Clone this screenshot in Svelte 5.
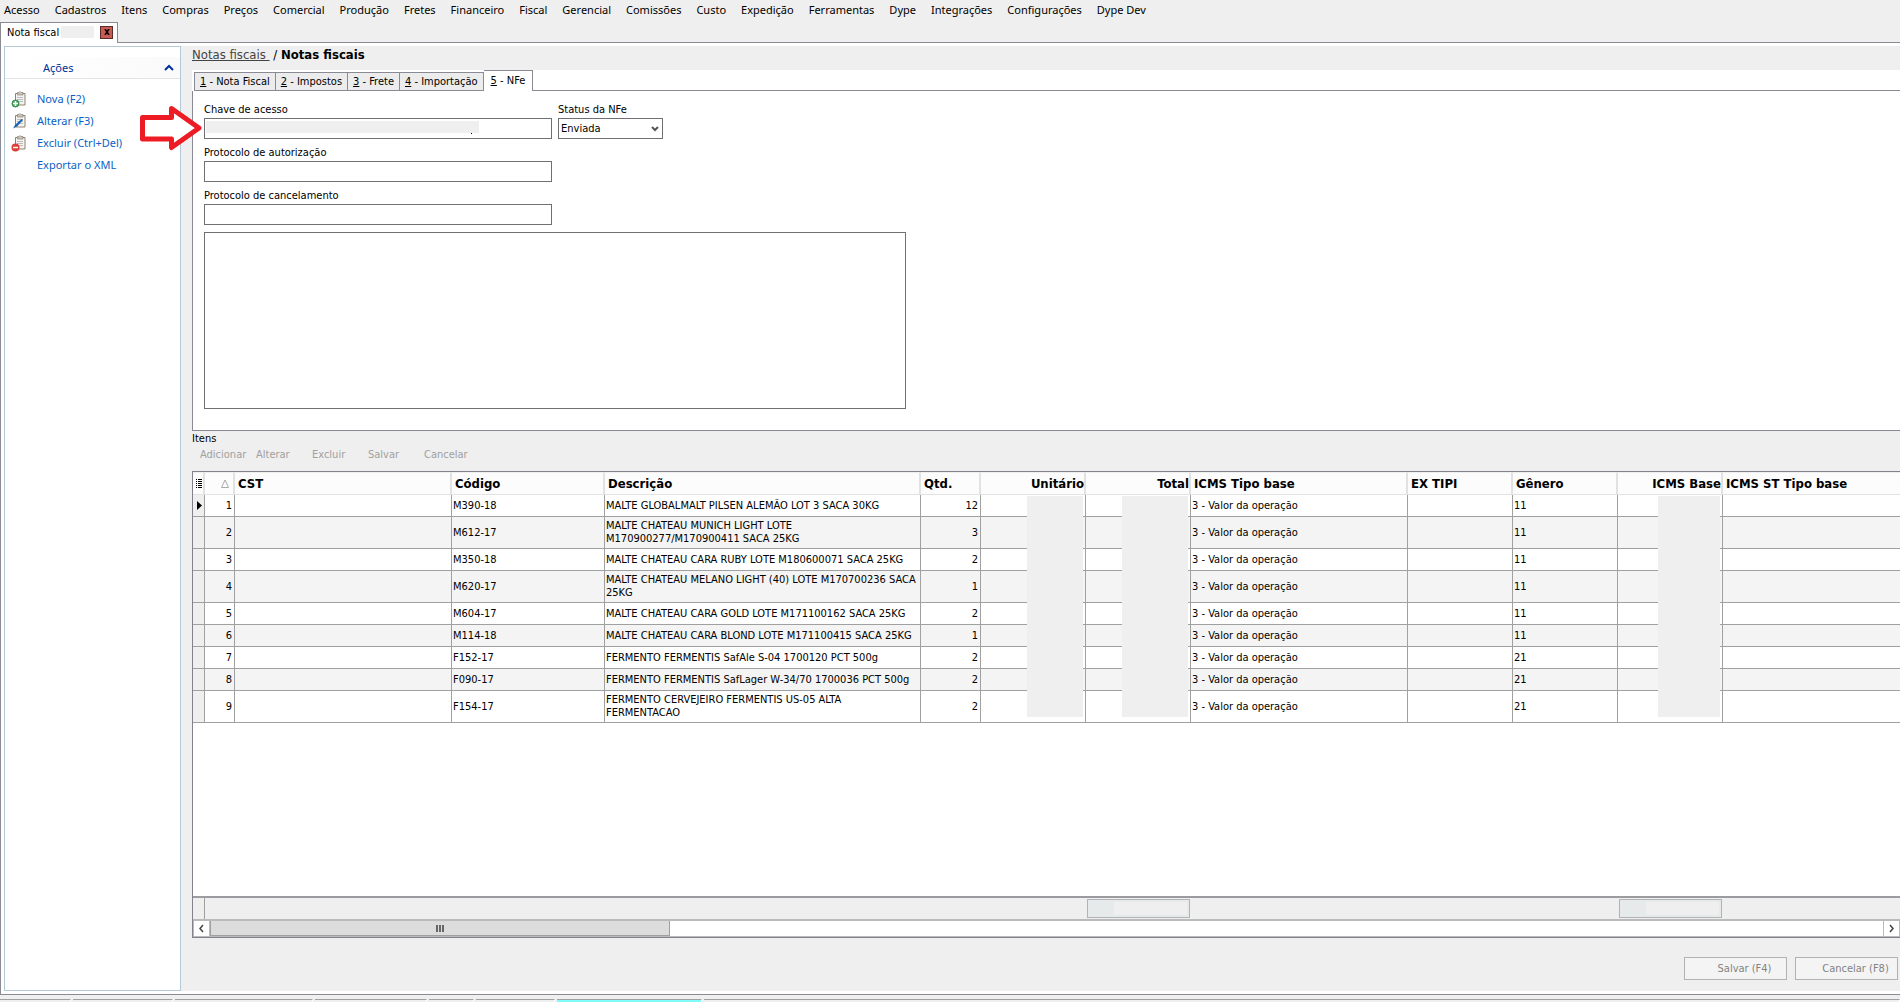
<script lang="ts">
  interface Action {
    label: string;
    icon: 'add' | 'edit' | 'remove' | '';
  }

  interface Item {
    code: string;
    description: string;
    qty: number;
    genre: number;
  }

  const menu = ['Acesso', 'Cadastros', 'Itens', 'Compras', 'Preços', 'Comercial', 'Produção', 'Fretes',
    'Financeiro', 'Fiscal', 'Gerencial', 'Comissões', 'Custo', 'Expedição', 'Ferramentas', 'Dype',
    'Integrações', 'Configurações', 'Dype Dev'];

  const actions: Action[] = [
    { label: 'Nova (F2)', icon: 'add' },
    { label: 'Alterar (F3)', icon: 'edit' },
    { label: 'Excluir (Ctrl+Del)', icon: 'remove' },
    { label: 'Exportar o XML', icon: '' }
  ];

  const tabs = ['Nota Fiscal', 'Impostos', 'Frete', 'Importação', 'NFe'];
  let activeTab = $state(4);

  const itemActions = ['Adicionar', 'Alterar', 'Excluir', 'Salvar', 'Cancelar'];

  const items: Item[] = [
    { code: 'M390-18', description: 'MALTE GLOBALMALT PILSEN ALEMÃO LOT 3 SACA 30KG', qty: 12, genre: 11 },
    { code: 'M612-17', description: 'MALTE CHATEAU MUNICH LIGHT LOTE\nM170900277/M170900411 SACA 25KG', qty: 3, genre: 11 },
    { code: 'M350-18', description: 'MALTE CHATEAU CARA RUBY LOTE M180600071 SACA 25KG', qty: 2, genre: 11 },
    { code: 'M620-17', description: 'MALTE CHATEAU MELANO LIGHT (40) LOTE M170700236 SACA\n25KG', qty: 1, genre: 11 },
    { code: 'M604-17', description: 'MALTE CHATEAU CARA GOLD LOTE M171100162 SACA 25KG', qty: 2, genre: 11 },
    { code: 'M114-18', description: 'MALTE CHATEAU CARA BLOND LOTE M171100415 SACA 25KG', qty: 1, genre: 11 },
    { code: 'F152-17', description: 'FERMENTO FERMENTIS SafAle S-04 1700120 PCT 500g', qty: 2, genre: 21 },
    { code: 'F090-17', description: 'FERMENTO FERMENTIS SafLager W-34/70 1700036 PCT 500g', qty: 2, genre: 21 },
    { code: 'F154-17', description: 'FERMENTO CERVEJEIRO FERMENTIS US-05 ALTA\nFERMENTACAO', qty: 2, genre: 21 }
  ];

  const columns = [12, 30, 217, 153, 316, 60, 105, 105, 217, 105, 105, 105];
  const statusPanels = [71, 100, 138, 112, 45, 79, 145];
</script>

<div class="window">
  <nav class="menu">
    {#each menu as entry}
      <button>{entry}</button>
    {/each}
  </nav>

  <div class="doc-tabs">
    <div class="doc-tab">
      <span>Nota fiscal</span>
      <span class="mask doc-mask"></span>
      <button class="close" aria-label="Fechar">
        <svg width="6" height="6" viewBox="0 0 6 6"><path d="M1 0l4 6M5 0L1 6" stroke="#000" stroke-width="1.500" /></svg>
      </button>
    </div>
    <div class="doc-line"></div>
  </div>

  <div class="workspace">
    <aside class="sidebar">
      <button class="group">
        <span>Ações</span>
        <svg width="10" height="7" viewBox="0 0 10 7"><path d="M1 6l4-4 4 4" fill="none" stroke="#00309c" stroke-width="2" /></svg>
      </button>
      <ul>
        {#each actions as action}
          <li>
            <button>
              <svg width="16" height="17" viewBox="0 0 16 17">
                {#if action.icon}
                  <path d="M4.500 2.500h9.500v11.500h-9.500z" fill="#f4f3f0" stroke="#94816f" />
                  <path d="M6.500 1.500h1.500l1-1 1 1h2v2.500H6.500z" fill="#c9c4bd" stroke="#8a8178" stroke-width=".7" />
                  <path d="M6 6.500h6M6 8.500h6M8 10.500h4" stroke="#b9bcc0" />
                {/if}
                {#if action.icon === 'add'}
                  <circle cx="4.500" cy="12.500" r="3.500" fill="#4ca560" stroke="#2f8a4a" />
                  <path d="M4.500 10v5M2 12.500h5" stroke="#fff" stroke-width="1.500" />
                {:else if action.icon === 'edit'}
                  <path d="M10.500 6l1.500 1-6 6.500L2 15.500l2-3.500z" fill="#1763b0" />
                {:else if action.icon === 'remove'}
                  <circle cx="4.500" cy="12.500" r="4" fill="#dd3f38" />
                  <path d="M2 12.500h5" stroke="#fff" stroke-width="1.500" />
                {/if}
              </svg>
              <span>{action.label}</span>
            </button>
          </li>
        {/each}
      </ul>
      <svg class="pointer" width="62" height="46" viewBox="0 0 62 46">
        <path d="M2.500 12.500h29V3.500L59 23 31.500 42.500V34h-29z" fill="#fff" stroke="#ed1c24" stroke-width="5" stroke-linejoin="round" />
      </svg>
    </aside>

    <main>
      <header class="crumbs"><a href="#notas">Notas fiscais&nbsp;</a> / <strong>Notas fiscais</strong></header>

      <div class="tab-strip">
        {#each tabs as tab, i}
          <button class:active={i === activeTab} onclick={() => (activeTab = i)}><u>{i + 1}</u> - {tab}</button>
        {/each}
        <div class="strip-line"></div>
      </div>

      <section class="page">
        <div class="row">
          <div class="field wide">
            <label for="key">Chave de acesso</label>
            <div class="key-box">
              <input id="key" type="text" />
              <span class="mask key-mask"></span>
            </div>
          </div>
          <div class="field">
            <label for="status">Status da NFe</label>
            <div class="select-box">
              <select id="status"><option>Enviada</option></select>
              <svg width="8" height="6" viewBox="0 0 8 6"><path d="M1 1l3 3 3-3" fill="none" stroke="#555" stroke-width="2" /></svg>
            </div>
          </div>
        </div>
        <div class="field wide">
          <label for="auth">Protocolo de autorização</label>
          <input id="auth" type="text" />
        </div>
        <div class="field wide">
          <label for="cancel">Protocolo de cancelamento</label>
          <input id="cancel" type="text" />
        </div>
        <textarea aria-label="Mensagem"></textarea>
      </section>

      <h2>Itens</h2>
      <div class="toolbar">
        {#each itemActions as entry}
          <button disabled>{entry}</button>
        {/each}
      </div>

      <section class="grid">
        <div class="grid-body">
          <table>
            <colgroup>
              {#each columns as width}
                <col style="width: {width}px" />
              {/each}
              <col />
            </colgroup>
            <thead>
              <tr>
                <th class="mark"><svg width="7" height="10" viewBox="0 0 7 10"><path d="M0 .5h1M2 .5h4M0 2.500h1M2 2.500h4M0 4.500h1M2 4.500h4M0 6.500h1M2 6.500h4M0 8.500h1M2 8.500h4" stroke="#000" /></svg></th>
                <th class="sort"><svg width="8" height="9" viewBox="0 0 8 9"><path d="M.5 8.500L4 1l3.500 7.500z" fill="none" stroke="#aaa" /></svg></th>
                <th>CST</th>
                <th>Código</th>
                <th>Descrição</th>
                <th>Qtd.</th>
                <th class="num">Unitário</th>
                <th class="num">Total</th>
                <th>ICMS Tipo base</th>
                <th>EX TIPI</th>
                <th>Gênero</th>
                <th class="num">ICMS Base</th>
                <th>ICMS ST Tipo base</th>
              </tr>
            </thead>
            <tbody>
              {#each items as item, i}
                <tr>
                  <td class="mark">{#if i === 0}<svg width="5" height="9" viewBox="0 0 5 9"><path d="M0 0l5 4.500L0 9z" /></svg>{/if}</td>
                  <td class="num">{i + 1}</td>
                  <td></td>
                  <td>{item.code}</td>
                  <td class="description">{item.description}</td>
                  <td class="num">{item.qty}</td>
                  <td></td>
                  <td></td>
                  <td>3 - Valor da operação</td>
                  <td></td>
                  <td>{item.genre}</td>
                  <td></td>
                  <td></td>
                </tr>
              {/each}
            </tbody>
          </table>
          <span class="mask col-mask unit"></span>
          <span class="mask col-mask total"></span>
          <span class="mask col-mask icms"></span>
        </div>
        <div class="summary">
          <div class="summary-mark"></div>
          <div class="sum sum-total"><span class="mask"></span></div>
          <div class="sum sum-icms"><span class="mask"></span></div>
        </div>
        <div class="scrollbar">
          <button aria-label="Rolar para a esquerda"><svg width="5" height="9" viewBox="0 0 5 9"><path d="M4 1L1 4.500 4 8" fill="none" stroke="#444" stroke-width="1.500" /></svg></button>
          <div class="thumb"><i></i><i></i><i></i></div>
          <button class="right" aria-label="Rolar para a direita"><svg width="5" height="9" viewBox="0 0 5 9"><path d="M1 1l3 3.500L1 8" fill="none" stroke="#444" stroke-width="1.500" /></svg></button>
        </div>
      </section>

      <footer>
        <button disabled>Salvar (F4)</button>
        <button disabled>Cancelar (F8)</button>
      </footer>
    </main>
  </div>

  <div class="status">
    {#each statusPanels as width, i}
      <span class:current={i === 6} style="width: {width}px"></span>
    {/each}
    <span class="rest"></span>
  </div>
</div>

<style>
  :global(body) {
    background: #efefef;
  }

  .window {
    display: flex;
    flex-direction: column;
    min-height: 100vh;
    overflow: hidden;
    background: #efefef;
    color: #000;
    font: 11px/13px "DejaVu Sans Condensed", Tahoma, sans-serif;
  }

  .window :global(*) {
    box-sizing: border-box;
  }

  button, input, select, textarea {
    margin: 0;
    padding: 0;
    border: 0;
    border-radius: 0;
    background: none;
    color: inherit;
    font: inherit;
  }

  svg {
    display: block;
    flex: none;
  }

  .mask {
    background: #efefef;
  }

  .menu {
    display: flex;
    gap: 15px;
    height: 22px;
    padding: 0 4px 2px;
  }

  .menu button {
    font: 11px/20px "Noto Sans", sans-serif;
    white-space: nowrap;
  }

  .doc-tabs {
    display: flex;
    height: 21px;
  }

  .doc-tab {
    display: flex;
    align-items: center;
    width: 118px;
    padding: 0 4px 2px 6px;
    border: 1px solid #8a8a94;
    border-bottom: 0;
    background: #fff;
    white-space: nowrap;
  }

  .doc-mask {
    flex: 1;
    height: 12px;
    margin: 0 6px 0 2px;
  }

  .close {
    display: flex;
    align-items: center;
    justify-content: center;
    width: 13px;
    height: 13px;
    border: 1px solid #5c2a28;
    background: #c75b51;
  }

  .doc-line {
    flex: 1;
    border-bottom: 1px solid #8a8a94;
  }

  .workspace {
    display: flex;
    flex: 1;
    padding: 3px 0 3px 3px;
    border-left: 1px solid #8a8a94;
    border-bottom: 1px solid #8a8a94;
    background: #fff;
  }

  .sidebar {
    position: relative;
    flex: none;
    width: 177px;
    padding-top: 10px;
    border: 1px solid #b4c8d6;
    background: #fff;
    font: 11px/22px "Noto Sans", sans-serif;
  }

  .group {
    display: flex;
    align-items: center;
    justify-content: space-between;
    width: 100%;
    height: 22px;
    padding: 0 6px 0 38px;
    border-bottom: 1px solid #e4e4e4;
    background: linear-gradient(90deg, #fff, #fafafa);
    color: #00309c;
  }

  ul {
    margin: 0;
    padding: 9px 0 0 6px;
    list-style: none;
  }

  li button {
    display: flex;
    align-items: center;
    gap: 10px;
    height: 22px;
    color: #0a5fc8;
  }

  /* callout over the side bar and the key field */
  .pointer {
    position: absolute;
    z-index: 2;
    top: 58px;
    left: 135px;
  }

  main {
    display: flex;
    flex: 1;
    flex-direction: column;
    min-width: 0;
    padding-left: 11px;
    background: #efefef;
  }

  .crumbs {
    height: 24px;
    font-size: 13px;
    line-height: 18px;
  }

  .crumbs a {
    color: #444;
  }

  .tab-strip {
    display: flex;
    align-items: flex-end;
    height: 21px;
    padding-left: 2px;
    background: #fff;
  }

  .tab-strip button {
    height: 19px;
    padding: 0 5px;
    border: 1px solid #8a8a94;
    border-left-width: 0;
    background: #ececec;
    white-space: nowrap;
  }

  .tab-strip button:first-child {
    border-left-width: 1px;
  }

  .tab-strip button.active {
    height: 21px;
    padding: 0 7px 2px;
    border-bottom: 0;
    background: #fff;
  }

  .strip-line {
    flex: 1;
    border-bottom: 1px solid #8a8a94;
  }

  .page {
    display: flex;
    flex-direction: column;
    gap: 7px;
    height: 340px;
    padding: 12px 11px 0;
    border-left: 1px solid #8a8a94;
    border-bottom: 1px solid #8a8a94;
    background: #fff;
  }

  .row {
    display: flex;
    gap: 6px;
  }

  .field {
    display: flex;
    flex-direction: column;
    gap: 1px;
  }

  .field label {
    line-height: 14px;
  }

  .wide {
    width: 348px;
  }

  .field input {
    display: block;
    width: 100%;
    height: 21px;
    border: 1px solid #6f6f74;
    background: #fff;
  }

  .key-box, .select-box {
    position: relative;
  }

  .key-mask {
    position: absolute;
    top: 3px;
    left: 2px;
    width: 273px;
    height: 12px;
  }

  .key-mask::after {
    content: "";
    position: absolute;
    right: 7px;
    bottom: -1px;
    width: 1px;
    height: 1px;
    background: #000;
  }

  select {
    display: block;
    width: 105px;
    height: 21px;
    padding: 0 2px;
    border: 1px solid #6f6f74;
    background: #fff;
    appearance: none;
  }

  .select-box svg {
    position: absolute;
    top: 8px;
    right: 4px;
  }

  textarea {
    width: 702px;
    height: 177px;
    border: 1px solid #6f6f74;
    background: #fff;
    resize: none;
  }

  h2 {
    margin: 0;
    font: inherit;
    line-height: 15px;
  }

  .toolbar {
    display: flex;
    height: 25px;
    padding-left: 8px;
  }

  .toolbar button {
    width: 56px;
    color: #a0a0a0;
    line-height: 17px;
    text-align: left;
    align-self: flex-start;
  }

  .grid {
    display: flex;
    flex: 1;
    flex-direction: column;
    border: 1px solid #82828c;
    border-right: 0;
    background: #fff;
  }

  .grid-body {
    position: relative;
    flex: 1;
  }

  table {
    width: 100%;
    border-collapse: separate;
    border-spacing: 0;
    table-layout: fixed;
  }

  th {
    height: 23px;
    padding: 0 0 0 3px;
    border-right: 2px solid #e2e2e2;
    border-bottom: 1px solid #e2e2e2;
    border-top: 1px solid #efefef;
    background: #fcfcfc;
    font: bold 13px/16px "DejaVu Sans Condensed", Tahoma, sans-serif;
    text-align: left;
    white-space: nowrap;
  }

  td {
    height: 22px;
    padding: 0 2px 0 1px;
    border-right: 1px solid #a0a0a0;
    border-bottom: 1px solid #a0a0a0;
    vertical-align: middle;
    white-space: nowrap;
  }

  td:last-child, th:last-child {
    border-right: 0;
  }

  tr:nth-child(even) td {
    background: #f4f4f4;
  }

  .num {
    text-align: right;
  }

  .sort svg {
    margin-left: 13px;
  }

  td.mark svg {
    margin-left: 3px;
  }

  tbody tr td.mark {
    background: #efefef;
  }

  td.description {
    padding-top: 2px;
    padding-bottom: 3px;
    white-space: pre;
  }

  .col-mask {
    position: absolute;
    top: 24px;
    height: 221px;
  }

  .unit {
    left: 834px;
    width: 56px;
  }

  .total {
    left: 929px;
    width: 66px;
  }

  .icms {
    left: 1465px;
    width: 62px;
  }

  .summary {
    display: flex;
    align-items: flex-start;
    height: 23px;
    border-top: 2px solid #9c9ca0;
    background: #efefef;
  }

  .summary-mark {
    width: 12px;
    height: 21px;
    border-right: 1px solid #a0a0a0;
  }

  .sum {
    width: 103px;
    height: 19px;
    margin-top: 1px;
    padding: 2px 2px 2px 26px;
    border: 1px solid #b0b4b4;
    background: #e6eaea;
  }

  .sum span {
    display: block;
    height: 100%;
  }

  .sum-total {
    margin-left: 882px;
  }

  .sum-icms {
    margin-left: 429px;
  }

  .scrollbar {
    display: flex;
    height: 18px;
    border-top: 2px solid #bbb;
    border-bottom: 1px solid #bbb;
    background: #fff;
  }

  .scrollbar button {
    display: flex;
    align-items: center;
    justify-content: center;
    width: 17px;
    border-left: 1px solid #bbb;
    border-right: 1px solid #bbb;
  }

  .scrollbar .right {
    margin-left: auto;
  }

  .thumb {
    display: flex;
    align-items: center;
    justify-content: center;
    gap: 1px;
    width: 460px;
    border: 1px solid #a0a0a0;
    border-top: 0;
    background: #dcdcdc;
  }

  .thumb i {
    width: 2px;
    height: 7px;
    background: #666;
  }

  footer {
    display: flex;
    justify-content: flex-end;
    gap: 8px;
    padding: 19px 2px 11px 0;
  }

  footer button {
    width: 103px;
    height: 23px;
    padding-left: 18px;
    border: 1px solid #b2b2b2;
    background: #f4f4f4;
    color: #838383;
  }

  .status {
    display: flex;
    gap: 2px;
    height: 7px;
    padding-top: 4px;
  }

  .status span {
    flex: none;
    border-top: 1px solid #a0a0a0;
    border-right: 1px solid #fff;
  }

  .status .current {
    background: #7ffbfb;
  }

  .status .rest {
    flex: 1;
  }
</style>
